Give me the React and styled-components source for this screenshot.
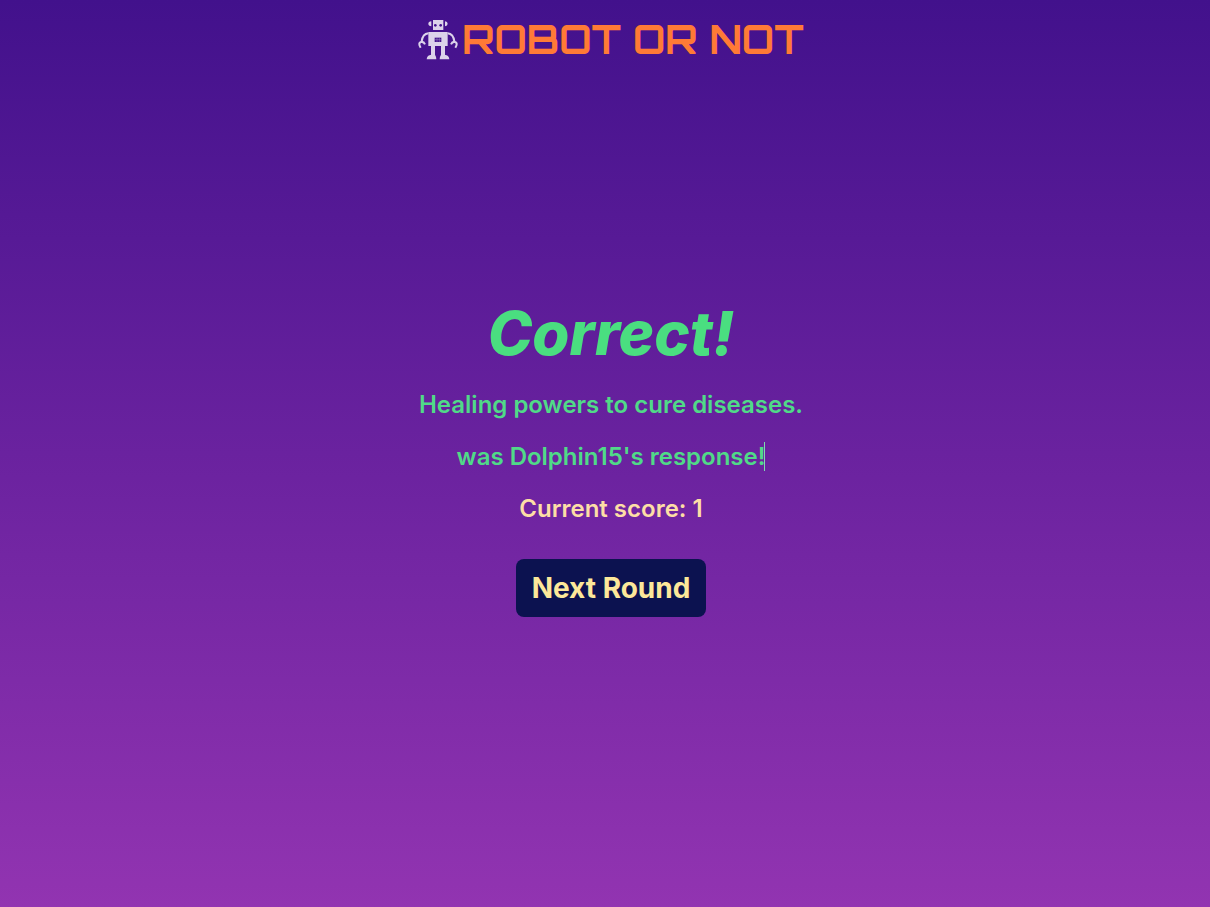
import React from "react";
import styled, { createGlobalStyle } from "styled-components";

const GlobalStyle = createGlobalStyle`
  * { box-sizing: border-box; }
  body {
    margin: 0;
    font-family: Inter, "Liberation Sans", sans-serif;
    font-optical-sizing: none;
  }
`;

const Page = styled.div`
  min-height: 100vh;
  display: flex;
  flex-direction: column;
  padding-left: 12px;
  background: linear-gradient(to bottom, #42118c, #6a229f 50%, #9234b1);
`;

const Header = styled.header`
  display: flex;
  justify-content: center;
  align-items: flex-start;
  gap: 4px;
  padding: 20px 0;
`;

const Title = styled.h1`
  margin: 0;
  font-family: Orbitron, "DejaVu Sans", sans-serif;
  font-size: 39px;
  line-height: 38px;
  font-weight: 700;
  color: #ff7a36;
  white-space: nowrap;
`;

const RobotIcon = styled.svg`
  width: 40px;
  height: 40px;
  flex: none;
`;

const Result = styled.main`
  flex: 1;
  display: flex;
  flex-direction: column;
  align-items: center;
  justify-content: center;
  gap: 20px;
  padding-bottom: 68px;
  text-align: center;
`;

const Verdict = styled.h2`
  margin: 0 0 6px;
  font-size: 60px;
  line-height: 60px;
  font-weight: 800;
  font-style: italic;
  color: #4ade80;
`;

const Message = styled.p`
  position: relative;
  margin: 0;
  font-size: 24px;
  line-height: 32px;
  font-weight: 600;
  color: ${(p) => (p.$tone === "score" ? "#fddea6" : "#50da88")};
`;

const Caret = styled.span`
  position: absolute;
  top: 1px;
  right: 0;
  width: 1px;
  height: 29px;
  background: #7fd9b0;
`;

const NextButton = styled.button`
  margin-top: 14px;
  padding: 11px 16px;
  border: 0;
  border-radius: 8px;
  background: #0c1250;
  color: #fde89a;
  font-family: inherit;
  font-size: 28px;
  line-height: 36px;
  font-weight: 700;
  cursor: pointer;
`;

function Robot() {
  return (
    <RobotIcon viewBox="0 0 120 120" aria-hidden="true">
      <g fill="#dcd3ea">
        <path d="M45 0h31v30h-31z" />
        <path d="M40 4v15q-9-1-9-7.500t9-7.500zM81 4v15q8-1 8-7.500t-8-7.500z" />
        <path d="M31 36h58v42h-58z" />
        <path d="M39 78h12v27h-12zM69 78h12v27h-12z" />
        <path d="M26 118q1-13 14-14h11q4 6 4 14zM65 118q0-8 4-14h11q13 1 14 14z" />
      </g>
      <g fill="none" stroke="#dcd3ea" strokeWidth="6">
        <path d="M31 40Q14 42 11 64M89 40q17 2 20 24" />
        <path d="M8 83Q-1 69 9 66q8-2 12 7M112 83q9-14-1-17-8-2-12 7" />
      </g>
      <g fill="#42118c">
        <circle cx="52" cy="16" r="4" />
        <circle cx="68" cy="16" r="4" />
        <path d="M50 53h20v13h-20z" />
      </g>
      <path d="M57 53v13M64 53v13M50 59h20" stroke="#a08cc4" strokeWidth="1.500" />
    </RobotIcon>
  );
}

export default function App() {
  return (
    <>
      <GlobalStyle />
      <Page>
        <Header>
          <Robot />
          <Title>ROBOT OR NOT</Title>
        </Header>
        <Result>
          <Verdict>Correct!</Verdict>
          <Message>Healing powers to cure diseases.</Message>
          <Message>
            was Dolphin15's response!
            <Caret />
          </Message>
          <Message $tone="score">Current score: 1</Message>
          <NextButton type="button">Next Round</NextButton>
        </Result>
      </Page>
    </>
  );
}
